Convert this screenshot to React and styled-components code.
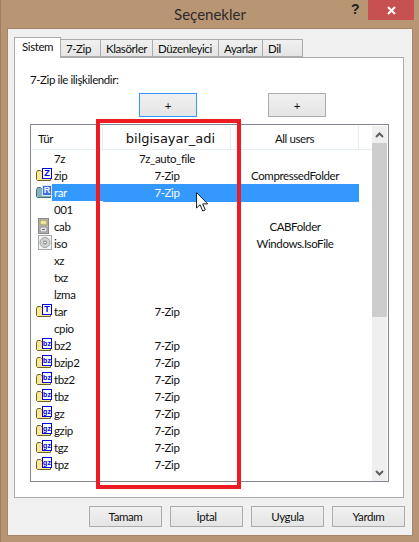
import React from 'react';
import styled, { createGlobalStyle } from 'styled-components';

const columns = '72px 128px 128px';

const rows = [
  { type: '7z', user: '7z_auto_file' },
  { type: 'zip', user: '7-Zip', all: 'CompressedFolder', badge: 'Z' },
  { type: 'rar', user: '7-Zip', badge: 'R', selected: true },
  { type: '001' },
  { type: 'cab', all: 'CABFolder', icon: 'cab' },
  { type: 'iso', all: 'Windows.IsoFile', icon: 'iso' },
  { type: 'xz' },
  { type: 'txz' },
  { type: 'lzma' },
  { type: 'tar', user: '7-Zip', badge: 'T' },
  { type: 'cpio' },
  { type: 'bz2', user: '7-Zip', badge: 'bz' },
  { type: 'bzip2', user: '7-Zip', badge: 'bz' },
  { type: 'tbz2', user: '7-Zip', badge: 'bz' },
  { type: 'tbz', user: '7-Zip', badge: 'bz' },
  { type: 'gz', user: '7-Zip', badge: 'gz' },
  { type: 'gzip', user: '7-Zip', badge: 'gz' },
  { type: 'tgz', user: '7-Zip', badge: 'gz' },
  { type: 'tpz', user: '7-Zip', badge: 'gz' },
];

const tabs = [
  { name: 'Sistem', width: 47 },
  { name: '7-Zip', width: 40 },
  { name: 'Klasörler', width: 52 },
  { name: 'Düzenleyici', width: 66 },
  { name: 'Ayarlar', width: 44 },
  { name: 'Dil', width: 40 },
];

const FolderIcon = ({ selected }) => (
  <svg width="16" height="12" viewBox="0 0 16 12">
    <path
      d="M0.5 3.5l1-2h3l1 1h9v9h-13l-1-1z"
      fill={selected ? '#86b3ba' : '#fbe892'}
      stroke={selected ? '#3d6f80' : '#6f6128'}
    />
  </svg>
);

const CabIcon = () => (
  <svg width="11" height="16" viewBox="0 0 11 16">
    <rect x="0.5" y="0.5" width="10" height="15" fill="#c9c9c9" stroke="#8a8a8a" />
    <rect x="2" y="2" width="7" height="5" fill="#f2e29a" stroke="#8f8f6a" />
    <rect x="2" y="9" width="7" height="5" fill="#e8e8e8" stroke="#8a8a8a" />
    <rect x="4" y="11" width="3" height="1" fill="#666" />
  </svg>
);

const IsoIcon = () => (
  <svg width="14" height="15" viewBox="0 0 14 15">
    <rect x="0.5" y="0.5" width="13" height="14" fill="#f4f4f4" stroke="#a8a8a8" />
    <circle cx="7" cy="7.5" r="5" fill="#cfd4d2" stroke="#a0a0a0" />
    <circle cx="7" cy="7.5" r="1.5" fill="#fff" stroke="#777" />
  </svg>
);

const Chevron = ({ up }) => (
  <svg width="9" height="6" viewBox="0 0 9 6">
    <path d={up ? 'M1 5l3.5-3.5L8 5' : 'M1 1l3.5 3.5L8 1'} fill="none" stroke="#606060" strokeWidth="2" />
  </svg>
);

const Global = createGlobalStyle`
  html, body {
    margin: 0;
    background: #b89573;
  }
  body {
    font-family: Lato, Roboto, "Liberation Sans", sans-serif;
    font-size: 11.5px;
    letter-spacing: -0.4px;
    color: #111;
  }
`;

const Frame = styled.div`
  position: relative;
  box-sizing: border-box;
  width: 419px;
  height: 542px;
  padding: 0 7px 7px 8px;
  display: flex;
  flex-direction: column;
  overflow: hidden;
  box-shadow: inset 1px 0 0 #9d7f62;
`;

const TitleBar = styled.div`
  height: 29px;
  display: flex;
  align-items: center;
  justify-content: center;
  position: relative;
  padding-bottom: 1px;
  box-sizing: border-box;
  font-size: 15px;
  letter-spacing: 0;
  color: #2b2b2b;
`;

const Help = styled.span`
  position: absolute;
  left: 343px;
  top: 1px;
  font-family: "Liberation Sans", sans-serif;
  font-weight: 700;
  font-size: 14px;
  color: #222;
`;

const Close = styled.div`
  position: absolute;
  left: 360px;
  top: 0;
  width: 46px;
  height: 20px;
  background: #c75050;
  display: flex;
  align-items: center;
  justify-content: center;
`;

const Client = styled.div`
  flex: 1;
  background: #f0f0f0;
  box-shadow: 0 0 0 1px #a5866a;
  padding: 8px 7px 8px 6px;
  display: flex;
  flex-direction: column;
`;

const TabRow = styled.div`
  display: flex;
  height: 20px;
  align-items: flex-end;
  position: relative;
  z-index: 1;
`;

const Tab = styled.div`
  box-sizing: border-box;
  width: ${(p) => p.$w}px;
  height: ${(p) => (p.$active ? 21 : 18)}px;
  margin-bottom: ${(p) => (p.$active ? -1 : 0)}px;
  padding-left: ${(p) => (p.$active ? 7 : 5)}px;
  padding-bottom: ${(p) => (p.$active ? 3 : 0)}px;
  display: flex;
  align-items: center;
  border: 1px solid #acacac;
  border-left: ${(p) => (p.$active ? '1px solid #acacac' : 'none')};
  border-bottom: ${(p) => (p.$active ? 'none' : '1px solid #acacac')};
  background: ${(p) => (p.$active ? '#fff' : 'linear-gradient(#f0f0f0, #e5e5e5)')};
`;

const Pane = styled.div`
  box-sizing: border-box;
  width: 390px;
  height: 441px;
  background: #fff;
  border: 1px solid #acacac;
  padding: 13px 15px 15px 15px;
  display: flex;
  flex-direction: column;
`;

const Label = styled.div`
  height: 18px;
  line-height: 18px;
`;

const PlusRow = styled.div`
  display: flex;
  gap: 71px;
  padding-left: 109px;
  margin-top: 4px;
`;

const Button = styled.div`
  box-sizing: border-box;
  width: ${(p) => p.$w || 58}px;
  height: ${(p) => p.$h || 24}px;
  border: 1px solid ${(p) => (p.$focus ? '#3399ff' : '#acacac')};
  background: linear-gradient(#f0f0f0, #e5e5e5);
  display: flex;
  align-items: center;
  justify-content: center;
`;

const List = styled.div`
  box-sizing: border-box;
  margin-top: 7px;
  width: 359px;
  height: 358px;
  border: 1px solid #828790;
  display: flex;
`;

const ListBody = styled.div`
  flex: 1;
`;

const Header = styled.div`
  box-sizing: border-box;
  display: grid;
  grid-template-columns: ${columns};
  height: 25px;
  border-bottom: 1px solid #e5effa;
`;

const HeaderCell = styled.div`
  box-sizing: border-box;
  border-right: 1px solid #e5effa;
  display: flex;
  align-items: center;
  justify-content: ${(p) => (p.$left ? 'flex-start' : 'center')};
  padding-left: ${(p) => (p.$left ? 7 : p.$big ? 8 : 0)}px;
  padding-top: 2px;
  font-family: ${(p) => (p.$big ? '"DejaVu Sans", sans-serif' : 'inherit')};
  font-size: ${(p) => (p.$big ? 13 : 11.5)}px;
  letter-spacing: ${(p) => (p.$big ? 0 : -0.4)}px;
`;

const Row = styled.div`
  display: grid;
  grid-template-columns: ${columns};
  height: 17px;
  line-height: 18px;
  color: ${(p) => (p.$selected ? '#fff' : '#111')};
`;

const TypeCell = styled.div`
  position: relative;
  padding-left: 21px;
`;

const TypeText = styled.span`
  display: block;
  height: 17px;
  padding-left: 2px;
  background: ${(p) => (p.$selected ? '#3399ff' : 'transparent')};
`;

const Cell = styled.div`
  text-align: center;
  background: ${(p) => (p.$selected ? '#3399ff' : 'transparent')};
`;

const FolderSlot = styled.div`
  position: absolute;
  left: 5px;
  top: 2px;
  line-height: 0;
`;

const FileSlot = styled.div`
  position: absolute;
  left: 7px;
  top: 0;
  line-height: 0;
`;

const Badge = styled.span`
  position: absolute;
  left: 11px;
  top: 1px;
  box-sizing: border-box;
  width: 10px;
  height: 11px;
  border: 1px solid ${(p) => (p.$selected ? '#dbe6ff' : '#0000e0')};
  background: ${(p) => (p.$selected ? '#3a6fe0' : '#fff')};
  color: ${(p) => (p.$selected ? '#fff' : '#0000e0')};
  font-family: "Liberation Sans", sans-serif;
  font-weight: 700;
  font-size: ${(p) => (p.$small ? 7 : 9)}px;
  line-height: 9px;
  text-align: center;
  letter-spacing: 0;
  overflow: hidden;
`;

const Scrollbar = styled.div`
  width: 15px;
  margin: 1px 1px 0 0;
  background: #efefef;
  display: flex;
  flex-direction: column;
`;

const ScrollArrow = styled.div`
  height: 17px;
  display: flex;
  align-items: center;
  justify-content: center;
`;

const Thumb = styled.div`
  height: 174px;
  background: #cdcdcd;
`;

const Spacer = styled.div`
  flex: 1;
`;

const Footer = styled.div`
  display: flex;
  justify-content: flex-end;
  gap: 8px;
  margin-top: 8px;
`;

const Marker = styled.div`
  position: absolute;
  left: 96px;
  top: 119px;
  width: 145px;
  height: 370px;
  box-sizing: border-box;
  border: 4px solid #ed1c24;
  pointer-events: none;
`;

const Cursor = styled.svg`
  position: absolute;
  left: 196px;
  top: 192px;
`;

export default function App() {
  return (
    <>
      <Global />
      <Frame>
        <TitleBar>
          Seçenekler
          <Help>?</Help>
          <Close>
            <svg width="9" height="9" viewBox="0 0 9 9">
              <path d="M1 1l7 7M8 1l-7 7" stroke="#fff" strokeWidth="2" />
            </svg>
          </Close>
        </TitleBar>
        <Client>
          <TabRow>
            {tabs.map((t, i) => (
              <Tab key={t.name} $active={i === 0} $w={t.width}>
                {t.name}
              </Tab>
            ))}
          </TabRow>
          <Pane>
            <Label>7-Zip ile ilişkilendir:</Label>
            <PlusRow>
              <Button $focus>+</Button>
              <Button>+</Button>
            </PlusRow>
            <List>
              <ListBody>
                <Header>
                  <HeaderCell $left>Tür</HeaderCell>
                  <HeaderCell $big>bilgisayar_adi</HeaderCell>
                  <HeaderCell>All users</HeaderCell>
                </Header>
                {rows.map((r) => (
                  <Row key={r.type} $selected={r.selected}>
                    <TypeCell>
                      {r.badge && (
                        <>
                          <FolderSlot>
                            <FolderIcon selected={r.selected} />
                          </FolderSlot>
                          <Badge $selected={r.selected} $small={r.badge.length > 1}>
                            {r.badge}
                          </Badge>
                        </>
                      )}
                      {r.icon === 'cab' && (
                        <FileSlot>
                          <CabIcon />
                        </FileSlot>
                      )}
                      {r.icon === 'iso' && (
                        <FileSlot>
                          <IsoIcon />
                        </FileSlot>
                      )}
                      <TypeText $selected={r.selected}>{r.type}</TypeText>
                    </TypeCell>
                    <Cell $selected={r.selected}>{r.user}</Cell>
                    <Cell $selected={r.selected}>{r.all}</Cell>
                  </Row>
                ))}
              </ListBody>
              <Scrollbar>
                <ScrollArrow>
                  <Chevron up />
                </ScrollArrow>
                <Thumb />
                <Spacer />
                <ScrollArrow>
                  <Chevron />
                </ScrollArrow>
              </Scrollbar>
            </List>
          </Pane>
          <Footer>
            <Button $w={73} $h={21}>Tamam</Button>
            <Button $w={73} $h={21}>İptal</Button>
            <Button $w={73} $h={21}>Uygula</Button>
            <Button $w={73} $h={21}>Yardım</Button>
          </Footer>
        </Client>
        <Marker />
        <Cursor width="13" height="20" viewBox="0 0 13 20">
          <path d="M0.5 0.5v15.5l3.6-3.2 2.6 6.2 2.6-1.1-2.6-6h5z" fill="#fff" stroke="#222" />
        </Cursor>
      </Frame>
    </>
  );
}
